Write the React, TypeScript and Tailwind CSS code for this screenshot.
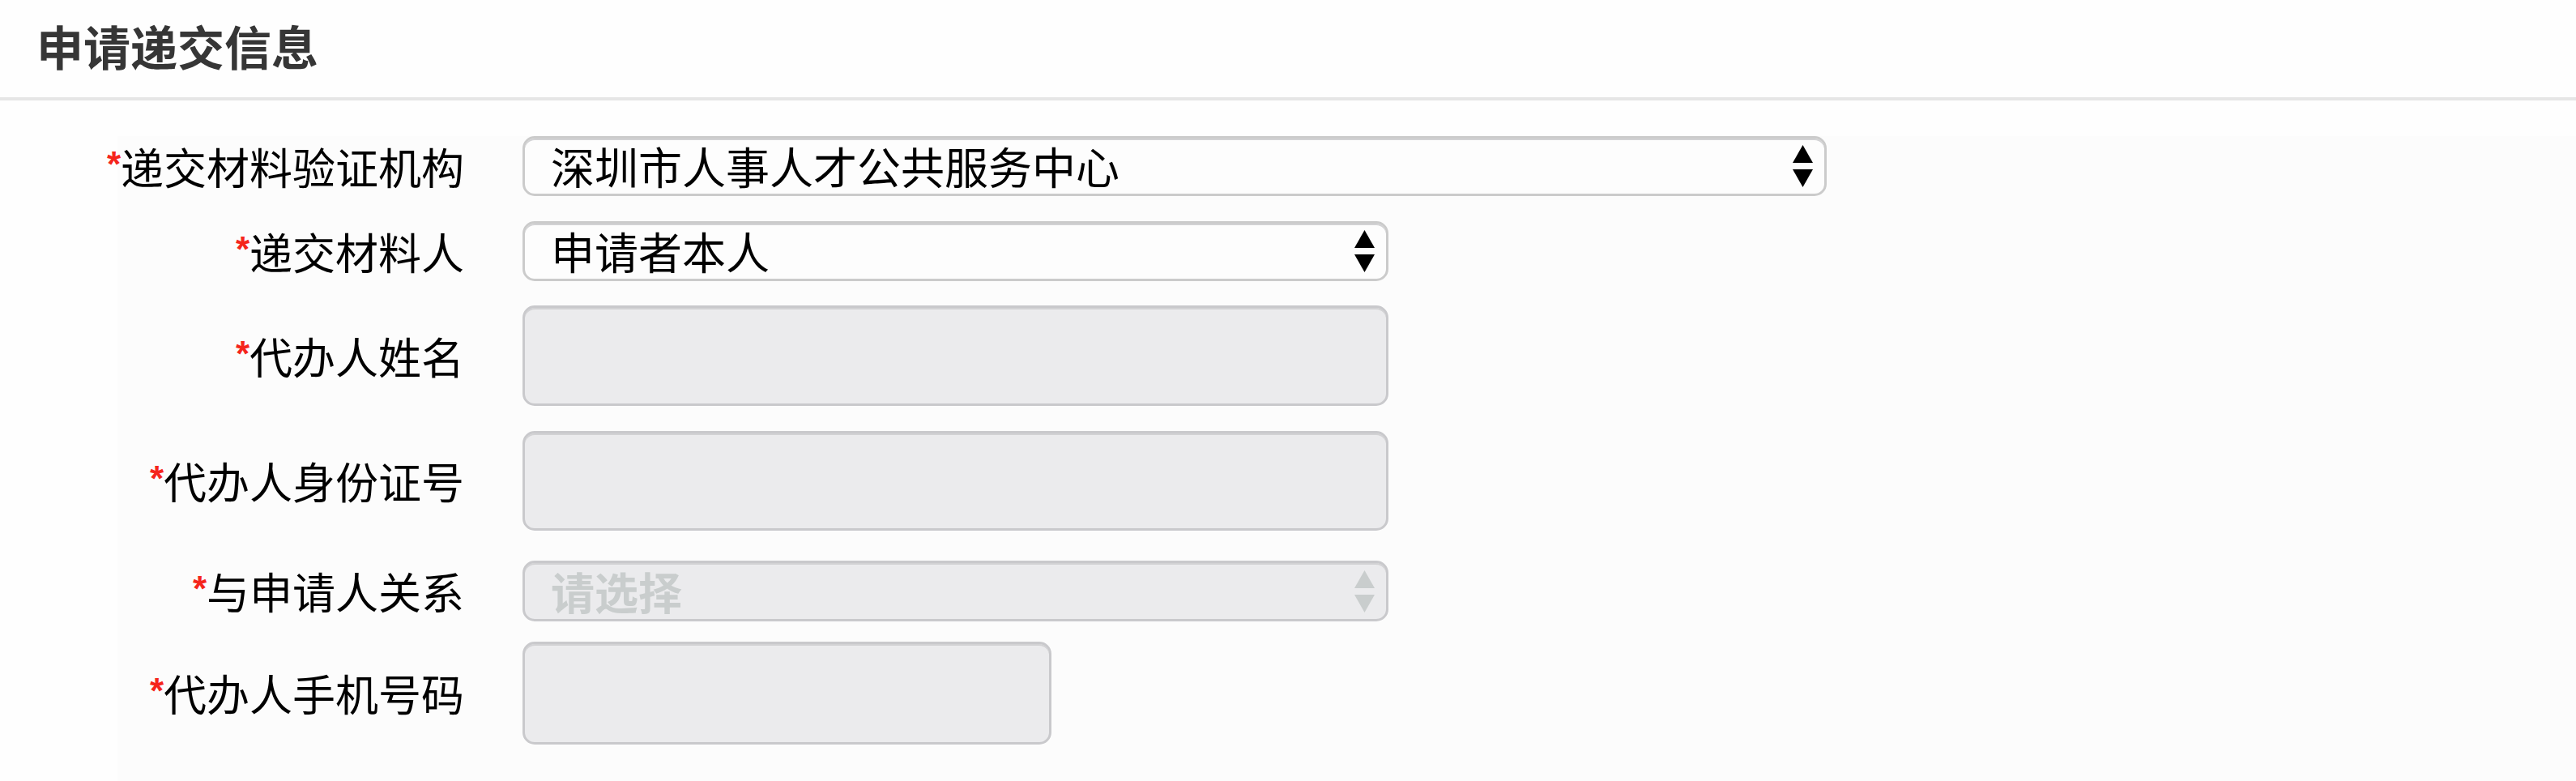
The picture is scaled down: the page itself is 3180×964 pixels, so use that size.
import React from "react";

type Field = {
  label: string;
  kind: "select" | "input";
  value?: string;
  placeholder?: string;
  disabled?: boolean;
  rowClass: string;
  boxClass: string;
};

const fields: Field[] = [
  {
    label: "递交材料验证机构",
    kind: "select",
    value: "深圳市人事人才公共服务中心",
    rowClass: "mt-0",
    boxClass: "w-[1610px] h-[74px]",
  },
  {
    label: "递交材料人",
    kind: "select",
    value: "申请者本人",
    rowClass: "mt-[31px]",
    boxClass: "w-[1069px] h-[74px]",
  },
  {
    label: "代办人姓名",
    kind: "input",
    disabled: true,
    rowClass: "mt-[30px]",
    boxClass: "w-[1069px] h-[124px]",
  },
  {
    label: "代办人身份证号",
    kind: "input",
    disabled: true,
    rowClass: "mt-[31px]",
    boxClass: "w-[1069px] h-[123px]",
  },
  {
    label: "与申请人关系",
    kind: "select",
    placeholder: "请选择",
    disabled: true,
    rowClass: "mt-[37px]",
    boxClass: "w-[1069px] h-[75px]",
  },
  {
    label: "代办人手机号码",
    kind: "input",
    disabled: true,
    rowClass: "mt-[25px]",
    boxClass: "w-[653px] h-[127px]",
  },
];

// the up/down arrows of a native select
const SelectArrows = ({ muted }: { muted?: boolean }) => (
  <svg width="25" height="52" viewBox="0 0 25 52" className="shrink-0">
    <g fill={muted ? "#c9cdcd" : "#000"}>
      <polygon points="12.5,0 25,22 0,22" />
      <polygon points="0,30 25,30 12.5,52" />
    </g>
  </svg>
);

const Control = ({ field }: { field: Field }) => {
  const base =
    "flex items-center rounded-[15px] border-[3px] shadow-[inset_0_2px_0_#d2d2d4]";
  const tone = field.disabled
    ? "bg-[#ebebed] border-[#c9c9cc]"
    : "bg-[#fdfdfd] border-[#cbcbcb]";

  if (field.kind === "input") {
    return <div className={`${base} ${tone} ${field.boxClass}`} />;
  }

  return (
    <div className={`${base} ${tone} ${field.boxClass} pl-[32px] pr-[14px]`}>
      {field.value ? (
        <span className="flex-1 text-[54px] leading-none text-black">
          {field.value}
        </span>
      ) : (
        <span className="flex-1 text-[54px] leading-none font-bold text-[#c9cdcd]">
          {field.placeholder}
        </span>
      )}
      <SelectArrows muted={field.disabled} />
    </div>
  );
};

export default function App() {
  return (
    <div className="min-h-[964px] w-full bg-[#fefefe] font-['Noto_Sans_CJK_SC',sans-serif]">
      <div className="pl-[45px] pt-[27px]">
        <h2 className="text-[58px] leading-[58px] font-bold text-[#363636]">
          申请递交信息
        </h2>
      </div>
      <div className="mt-[35px] h-[4px] w-full bg-[#e6e6e6]" />

      <div className="ml-[145px] mt-[44px] min-h-[796px] bg-[#fcfcfc]">
        {fields.map((f) => (
          <div key={f.label} className={`flex items-center ${f.rowClass}`}>
            <div className="flex w-[428px] shrink-0 justify-end whitespace-nowrap text-[53px] leading-none text-black">
              <span className="self-start mt-[2px] font-['Liberation_Sans',sans-serif] text-[44px] font-bold text-[#f5251c]">
                *
              </span>
              <span>{f.label}</span>
            </div>
            <div className="ml-[72px]">
              <Control field={f} />
            </div>
          </div>
        ))}
      </div>
    </div>
  );
}
